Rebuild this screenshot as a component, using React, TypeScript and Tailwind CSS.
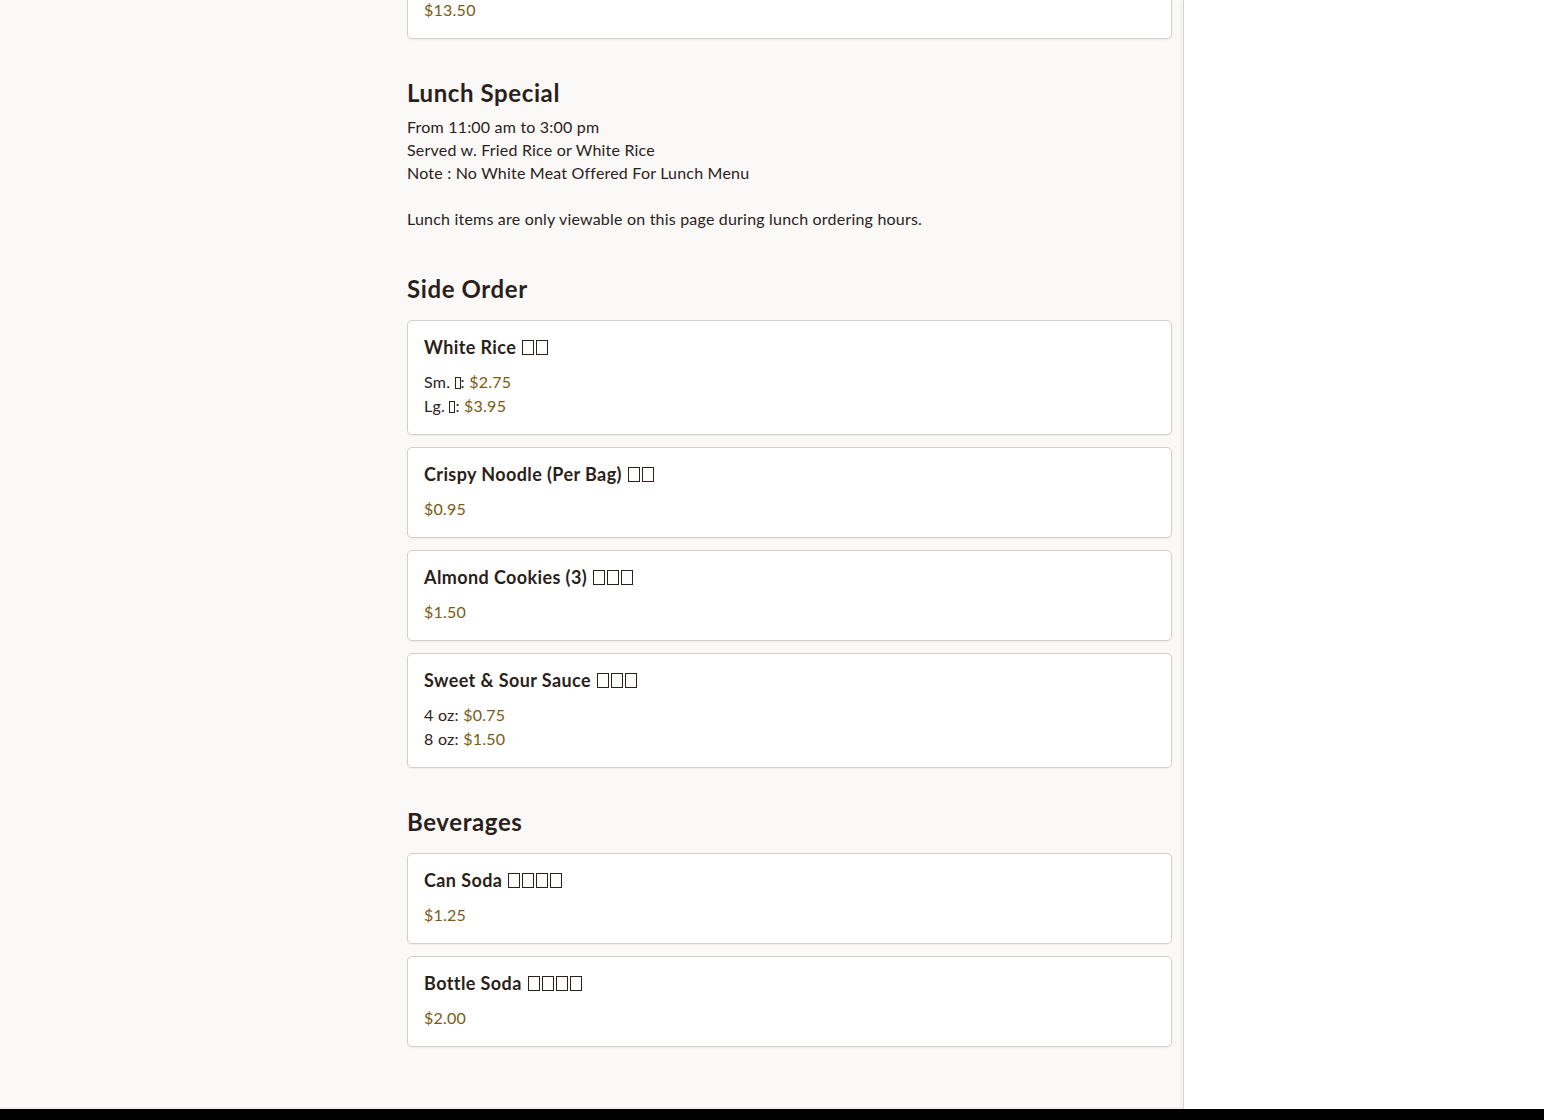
import React from 'react';

type Price = { label?: string; price: string };
type Item = { name: string; tofu: number; prices: Price[] };

// glyphs that the reference font can't show: drawn as empty boxes
function Tofu({ n, small }: { n: number; small?: boolean }) {
  return (
    <span className="inline-flex gap-[2px] align-[-1px]">
      {Array.from({ length: n }).map((_, i) => (
        <span
          key={i}
          className={
            small
              ? 'inline-block w-[6px] h-[12px] border border-[#2b211d]'
              : 'inline-block w-[12px] h-[15px] border border-[#2b211d]'
          }
        />
      ))}
    </span>
  );
}

const sideOrder: Item[] = [
  {
    name: 'White Rice',
    tofu: 2,
    prices: [
      { label: 'Sm.', price: '$2.75' },
      { label: 'Lg.', price: '$3.95' },
    ],
  },
  { name: 'Crispy Noodle (Per Bag)', tofu: 2, prices: [{ price: '$0.95' }] },
  { name: 'Almond Cookies (3)', tofu: 3, prices: [{ price: '$1.50' }] },
  {
    name: 'Sweet & Sour Sauce',
    tofu: 3,
    prices: [
      { label: '4 oz', price: '$0.75' },
      { label: '8 oz', price: '$1.50' },
    ],
  },
];

const beverages: Item[] = [
  { name: 'Can Soda', tofu: 4, prices: [{ price: '$1.25' }] },
  { name: 'Bottle Soda', tofu: 4, prices: [{ price: '$2.00' }] },
];

function MenuCard({ item }: { item: Item }) {
  return (
    <div className="rounded-[5px] border border-[#d3cfcb] bg-white px-4 pt-[14px] pb-4 shadow-[0_1px_2px_rgba(0,0,0,0.05)]">
      <div className="mb-[11px] text-[18px] font-bold leading-6 tracking-[0.4px] text-[#2b1f1a]">
        {item.name}
        <span className="ml-[6px]">
          <Tofu n={item.tofu} />
        </span>
      </div>
      {item.prices.map((p, i) => (
        <div key={i} className="text-[16px] leading-6 tracking-[0.25px] text-[#2b211d]">
          {p.label && (
            <>
              {p.label}
              {p.label.endsWith('.') && (
                <>
                  {' '}
                  <Tofu n={1} small />
                </>
              )}
              :{' '}
            </>
          )}
          <span className="text-[#7a5b14]">{p.price}</span>
        </div>
      ))}
    </div>
  );
}

function Heading({ children, className }: { children: React.ReactNode; className?: string }) {
  return (
    <h2 className={`text-[24px] font-bold leading-8 tracking-[0.6px] text-[#2b1f1a] ${className ?? ''}`}>
      {children}
    </h2>
  );
}

export default function App() {
  return (
    <div
      className="min-h-screen bg-black"
      style={{ fontFamily: 'Lato, "Noto Sans", "Noto Sans CJK SC", sans-serif' }}
    >
      <div className="flex">
        {/* Menu column */}
        <main className="w-[1183px] shrink-0 border-b-2 border-[#eeedeb] bg-[#faf9f7] pl-[407px] pr-[11px] pb-[60px]">
          <div className="w-[765px]">
            {/* tail of the previous card */}
            <div className="rounded-b-[5px] border-x border-b border-[#d3cfcb] bg-white px-4 pb-4 shadow-[0_1px_2px_rgba(0,0,0,0.05)]">
              <div className="-mt-[2px] text-[16px] leading-6 tracking-[0.25px] text-[#7a5b14]">$13.50</div>
            </div>

            {/* Lunch Special */}
            <Heading className="mt-[38px] mb-[6px]">Lunch Special</Heading>
            <div className="text-[16px] leading-[23px] tracking-[0.2px] text-[#2b211d]">
              <p>From 11:00 am to 3:00 pm</p>
              <p>Served w. Fried Rice or White Rice</p>
              <p>Note : No White Meat Offered For Lunch Menu</p>
              <p className="mt-[23px]">Lunch items are only viewable on this page during lunch ordering hours.</p>
            </div>

            {/* Side Order */}
            <Heading className="mt-[43px] mb-[15px]">Side Order</Heading>
            <div className="flex flex-col gap-3">
              {sideOrder.map((it) => (
                <MenuCard key={it.name} item={it} />
              ))}
            </div>

            {/* Beverages */}
            <Heading className="mt-[38px] mb-[15px]">Beverages</Heading>
            <div className="flex flex-col gap-3">
              {beverages.map((it) => (
                <MenuCard key={it.name} item={it} />
              ))}
            </div>
          </div>
        </main>

        {/* Cart panel */}
        <aside className="flex-1 border-l border-[#d6d4d1] bg-white shadow-[-3px_0_4px_rgba(0,0,0,0.03)]" />
      </div>
    </div>
  );
}
